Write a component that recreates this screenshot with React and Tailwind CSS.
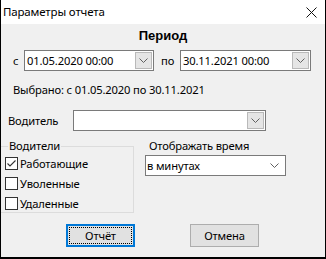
import React from "react";

function Chevron({ className = "" }) {
  return (
    <svg width="9" height="5" viewBox="0 0 9 5" className={className}>
      <path d="M0.5 0.5 L4.5 4.5 L8.5 0.5" fill="none" stroke="#606060" strokeWidth="1" />
    </svg>
  );
}

function DropBtn() {
  return (
    <div className="w-[17px] h-[17px] bg-[#e5e5e5] border border-[#b9b9b9] flex items-center justify-center">
      <Chevron />
    </div>
  );
}

function DateBox({ value, w }) {
  return (
    <div className={`${w} h-[21px] bg-white border border-[#7a7a7a] flex items-center pl-[2px] pr-[1px]`}>
      <span className="flex-1 leading-none">{value}</span>
      <DropBtn />
    </div>
  );
}

function Check({ checked, label }) {
  return (
    <div className="flex items-center h-[13px]">
      <div className="w-[13px] h-[13px] border border-[#333] bg-white flex items-center justify-center">
        {checked && (
          <svg width="11" height="11" viewBox="0 0 11 11">
            <path d="M1.5 5.5 L4 8 L9.5 2.5" fill="none" stroke="#333" strokeWidth="1.1" />
          </svg>
        )}
      </div>
      <span className="ml-[2px] leading-none">{label}</span>
    </div>
  );
}

export default function App() {
  return (
    <div className="w-[326px] h-[259px] flex flex-col bg-[#f0f0f0] border-l border-r-[1px] border-b-2 border-black text-black text-[11.2px] tracking-[-0.15px] font-['Noto_Sans',sans-serif] overflow-hidden">
      <div className="h-[24px] bg-white flex items-center justify-between pl-[2px] pr-[8px] shrink-0">
        <span className="leading-none text-[11.5px]">Параметры отчета</span>
        <svg width="11" height="11" viewBox="0 0 11 11">
          <path d="M0.5 0.5 L10.5 10.5 M10.5 0.5 L0.5 10.5" stroke="#111" strokeWidth="1" />
        </svg>
      </div>
      <div className="flex justify-center mt-[5px] h-[12px] items-center">
        <span className="font-bold text-[13px] tracking-normal leading-none font-['Liberation_Sans',sans-serif]">Период</span>
      </div>
      <div className="flex items-center mt-[9px] ml-[12px]">
        <span className="w-[11px] leading-none">с</span>
        <DateBox value="01.05.2020 00:00" w="w-[130px]" />
        <span className="ml-[7px] w-[19px] leading-none">по</span>
        <DateBox value="30.11.2021 00:00" w="w-[131px]" />
      </div>
      <div className="mt-[13px] ml-[12px] leading-none">Выбрано: с 01.05.2020 по 30.11.2021</div>
      <div className="flex items-center mt-[15px] ml-[7px]">
        <span className="w-[65px] leading-none">Водитель</span>
        <div className="w-[193px] h-[21px] bg-white border border-[#7a7a7a] flex items-center justify-end pr-[1px]">
          <DropBtn />
        </div>
      </div>
      <div className="flex mt-[9px]">
        <div className="w-[133px] h-[73px] relative ml-0">
          <div className="absolute left-[-2px] top-[6px] w-[135px] h-[67px] border border-[#dcdcdc]" />
          <span className="absolute left-[7px] top-0 px-[1px] bg-[#f0f0f0] leading-none">Водители</span>
          <div className="absolute left-[4px] top-[17px] flex flex-col gap-[7px]">
            <Check checked label="Работающие" />
            <Check label="Уволенные" />
            <Check label="Удаленные" />
          </div>
        </div>
        <div className="ml-[11px] flex flex-col">
          <span className="ml-[4px] leading-none">Отображать время</span>
          <div className="mt-[4px] w-[141px] h-[21px] bg-white border border-[#7a7a7a] flex items-center justify-between pl-[1px] pr-[6px]">
            <span className="leading-none">в минутах</span>
            <Chevron />
          </div>
        </div>
      </div>
      <div className="flex mt-[11px] ml-[65px] gap-[55px]">
        <div className="w-[69px] h-[23px] border-2 border-[#0078d7] bg-[#e1e1e1] p-[1px]">
          <div className="w-full h-full border border-dotted border-black flex items-center justify-center leading-none">
            Отчёт
          </div>
        </div>
        <div className="w-[69px] h-[23px] border border-[#adadad] bg-[#e1e1e1] flex items-center justify-center leading-none">
          Отмена
        </div>
      </div>
    </div>
  );
}
